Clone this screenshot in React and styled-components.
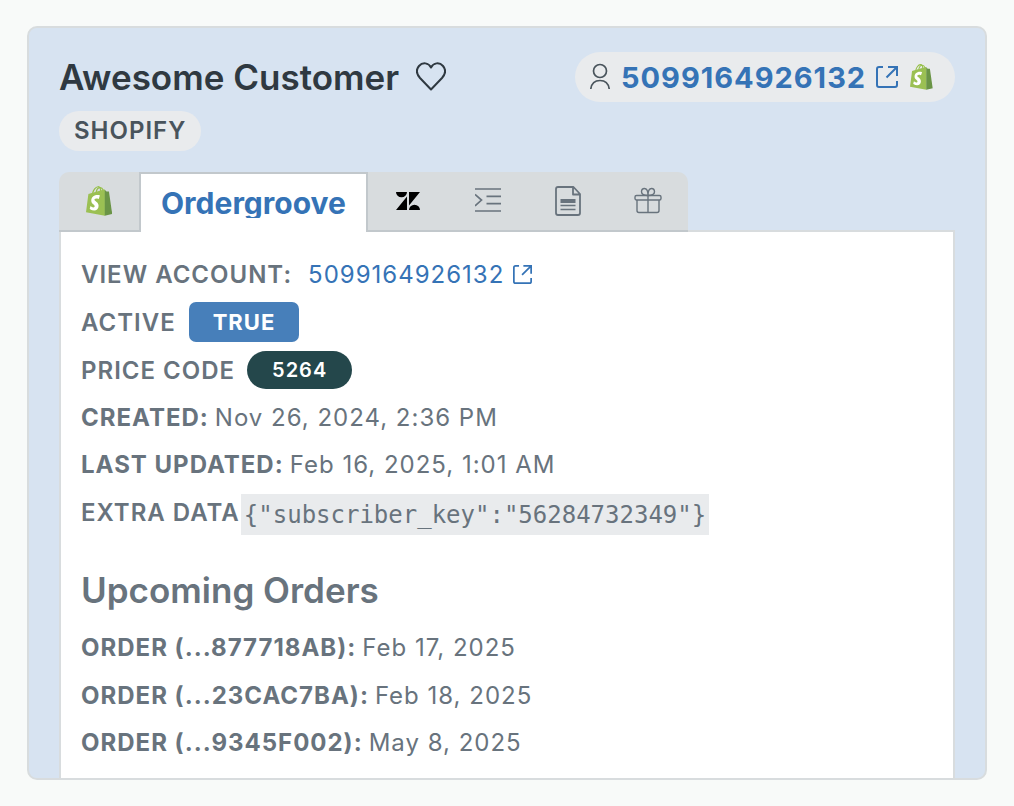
import React from "react";
import styled, { createGlobalStyle, css } from "styled-components";

const color = {
  page: "#f8faf9",
  header: "#d7e3f1",
  line: "#d8dcde",
  lineDark: "#c2c8cc",
  chip: "#e9ebed",
  ink: "#2f3941",
  inkSoft: "#49545c",
  text: "#68737d",
  link: "#3573b6",
};

const GlobalStyle = createGlobalStyle`
  *, *::before, *::after { box-sizing: border-box; }
  body {
    margin: 0;
    background: ${color.page};
    color: ${color.text};
    font-family: Inter, "Liberation Sans", sans-serif;
    -webkit-font-smoothing: antialiased;
  }
  h1, h2, dl, dd, dt { margin: 0; }
  svg { display: block; flex: none; }
`;

const Page = styled.main`
  padding: 26px 27px;
`;

const Card = styled.article`
  border: 2px solid ${color.line};
  border-radius: 10px;
  background: ${color.header};
  padding: 24px 30px 0;
  overflow: hidden;
`;

const Header = styled.header`
  display: flex;
  align-items: center;
  justify-content: space-between;
  min-height: 50px;
`;

const TitleGroup = styled.div`
  display: flex;
  align-items: center;
  gap: 17px;
`;

const Title = styled.h1`
  font-size: 35px;
  line-height: 50px;
  font-weight: 600;
  color: ${color.ink};
`;

const IconButton = styled.button`
  padding: 0;
  border: 0;
  background: none;
  color: ${color.ink};
  cursor: pointer;
`;

const IdChip = styled.div`
  display: flex;
  align-items: center;
  height: 50px;
  padding: 0 22px 0 15px;
  border-radius: 25px;
  background: ${color.chip};
  color: ${color.inkSoft};
`;

const Link = styled.a`
  display: inline-flex;
  align-items: center;
  color: ${color.link};
  text-decoration: none;
  letter-spacing: 1px;
  ${({ $strong }) =>
    $strong
      ? css`
          gap: 10px;
          margin: 0 12px 0 11px;
          font-size: 29px;
          font-weight: 700;
        `
      : css`
          gap: 9px;
          margin-left: 16px;
        `}
`;

const Tag = styled.span`
  display: inline-block;
  margin: 9px 0 21px;
  padding: 0 15px;
  border-radius: 20px;
  background: ${color.chip};
  color: ${color.inkSoft};
  font-size: 24px;
  line-height: 40px;
  font-weight: 600;
  letter-spacing: 1px;
  vertical-align: top;
`;

const Tabs = styled.div`
  display: flex;
  width: fit-content;
  height: 60px;
  margin-bottom: -2px;
  position: relative;
  border-radius: 10px 10px 0 0;
  background: ${color.line};
  overflow: hidden;
`;

const Tab = styled.button`
  display: flex;
  align-items: center;
  justify-content: center;
  width: 80px;
  padding: 0;
  border: 0;
  border-bottom: 2px solid ${color.lineDark};
  background: none;
  color: ${color.text};
  cursor: pointer;

  &[aria-selected="true"] {
    width: auto;
    padding: 0 20px;
    border: 2px solid ${color.lineDark};
    border-bottom: 0;
    background: #fff;
    color: ${color.link};
  }
`;

const TabLabel = styled.span`
  font: 700 30px/30px Inter, "Liberation Sans", sans-serif;
  overflow: hidden;
`;

const Panel = styled.section`
  border: 2px solid ${color.line};
  border-bottom: 0;
  background: #fff;
  padding: 19px 20px 12px;
`;

const Fields = styled.dl`
  font-size: 24px;
`;

const Field = styled.div`
  display: flex;
  align-items: center;
  height: ${({ $tall }) => ($tall ? 48 : 47)}px;
  letter-spacing: 1px;
  white-space: nowrap;
`;

const Label = styled.dt`
  font-weight: ${({ $bold }) => ($bold ? 700 : 600)};
`;

const Value = styled.dd`
  margin-left: ${({ $gap = 6 }) => $gap}px;
`;

const Flag = styled.span`
  display: block;
  padding: 0 24px;
  border-radius: 7px;
  background: #477fba;
  color: #fff;
  font-size: 22px;
  line-height: 40px;
  font-weight: 700;
`;

const Code = styled.span`
  display: block;
  padding: 0 25px;
  border-radius: 19px;
  background: #24474b;
  color: #fff;
  font-size: 20px;
  line-height: 38px;
  font-weight: 600;
`;

const Json = styled.code`
  display: block;
  margin-top: 4px;
  padding: 2px 3px 0;
  background: ${color.chip};
  font-family: "DejaVu Sans Mono", monospace;
  font-size: 24px;
  line-height: 39px;
  letter-spacing: 0;
`;

const SectionTitle = styled.h2`
  margin: 32px 0 12px;
  font-size: 35px;
  line-height: 44px;
  font-weight: 600;
`;

const Shopify = ({ height = 30 }) => (
  <svg height={height} viewBox="0 0 110 125" aria-hidden="true">
    <g fill="none" stroke="#95bf47" strokeWidth="5">
      <path d="M28 30C30 17 40 3.500 50 3C58 2.600 62 11 61 22" />
      <path d="M42 27C44 16 51 6.500 59 6.500C66 6.500 70 13 72 18" />
    </g>
    <path fill="#9bc053" d="M79 15.500V124L0 109.300L9.400 37C9.800 33.500 10 33.400 13.500 32.300L74.700 14.800C76.500 14.300 78 14.500 79 15.500Z" />
    <path fill="#6a9446" d="M78.100 123.900l31.400-7.800c0 0-13.500-91.300-13.600-91.900c-.1-.6-.6-1-1.100-1c-.5 0-9.300-.2-9.300-.2s-5.400-5.200-7.400-7.200V123.900z" />
    <path fill="#fff" d="M57.900 39.500l-4.900 14.600c0 0-4.300-2.300-9.600-2.300c-7.700 0-8.100 4.800-8.100 6c0 6.600 17.200 9.100 17.200 24.600c0 12.200-7.700 20-18.100 20c-12.500 0-18.900-7.800-18.900-7.800l3.400-11.100c0 0 6.600 5.700 12.100 5.700c3.600 0 5.100-2.800 5.100-4.900c0-8.600-14.100-9-14.100-23.100c0-11.900 8.500-23.400 25.800-23.400C54.400 37.800 57.900 39.500 57.900 39.500z" />
  </svg>
);

const Line = ({ width, height, weight = 2, children }) => (
  <svg
    width={width}
    height={height}
    viewBox={`0 0 ${width} ${height}`}
    fill="none"
    stroke="currentColor"
    strokeWidth={weight}
    aria-hidden="true"
  >
    {children}
  </svg>
);

const Heart = () => (
  <Line width={30} height={32}>
    <path strokeLinejoin="round" d="M15 28.500L4 17C.5 13 0 8.500 3 5C6.500 1 12.500 1.500 15 6.500C17.500 1.500 23.500 1 27 5C30 8.500 29.500 13 26 17Z" />
  </Line>
);

const Person = () => (
  <Line width={20} height={28} weight={1.7}>
    <circle cx="10" cy="8" r="6.500" />
    <path d="M.8 26C1.500 20.500 5 17.500 10 17.500S18.500 20.500 19.200 26" />
  </Line>
);

const External = ({ size }) => (
  <svg width={size} height={size} viewBox="0 0 22 22" fill="none" stroke="currentColor" strokeWidth="2" aria-hidden="true">
    <path d="M7 1H3Q1 1 1 3V19Q1 21 3 21H19Q21 21 21 19V15" />
    <path d="M12 1H21V10M21 1L10.500 11.500" />
  </svg>
);

const Zendesk = () => (
  <svg width="24" height="18" viewBox="0 0 24 18" fill="#000" aria-hidden="true">
    <path d="M0 0H11A5.500 5.300 0 0 1 0 0ZM11 4.500V18H0ZM13 0H24L13 13.500ZM13 18A5.500 5.300 0 0 1 24 18Z" />
  </svg>
);

const Indent = () => (
  <Line width={26} height={28} weight={1.7}>
    <path d="M0 2H26M11.500 9.300H26M11.500 16.700H26M0 24H26M0 7.500L6.500 13L0 19" />
  </Line>
);

const Document = () => (
  <Line width={26} height={30} weight={1.8}>
    <path strokeLinejoin="round" d="M3 1H18.500L25 8V27Q25 29 23 29H3Q1 29 1 27V3Q1 1 3 1ZM18 1V8.500H25" />
    <path strokeWidth="4" d="M5.500 15H20.500" />
    <path strokeWidth="1.500" d="M5.500 19.500H20.500M5.500 23.500H20.500" />
  </Line>
);

const Gift = () => (
  <Line width={28} height={28} weight={1.4}>
    <rect x="1" y="8.500" width="26" height="4.500" rx="1.500" />
    <path d="M3 13V23.500Q3 25.500 5 25.500H23Q25 25.500 25 23.500V13M14 8.500V25.500" />
    <path d="M14 8.500C10 8.500 7.500 7.500 7.500 4.800C7.500 2.800 9 1.500 10.500 1.500C12.800 1.500 14 4 14 8.500C14 4 15.200 1.500 17.500 1.500C19 1.500 20.500 2.800 20.500 4.800C20.500 7.500 18 8.500 14 8.500Z" />
  </Line>
);

const ORDERS = [
  ["ORDER (...877718AB):", "Feb 17, 2025"],
  ["ORDER (...23CAC7BA):", "Feb 18, 2025"],
  ["ORDER (...9345F002):", "May 8, 2025"],
];

export default function App() {
  return (
    <>
      <GlobalStyle />
      <Page>
        <Card>
          <Header>
            <TitleGroup>
              <Title>Awesome Customer</Title>
              <IconButton type="button" aria-label="Favourite">
                <Heart />
              </IconButton>
            </TitleGroup>
            <IdChip>
              <Person />
              <Link href="#customer" $strong>
                5099164926132
                <External size={22} />
              </Link>
              <Shopify height={26} />
            </IdChip>
          </Header>
          <Tag>SHOPIFY</Tag>
          <Tabs role="tablist">
            <Tab type="button" role="tab" aria-selected="false" aria-label="Shopify">
              <Shopify />
            </Tab>
            <Tab type="button" role="tab" aria-selected="true">
              <TabLabel>Ordergroove</TabLabel>
            </Tab>
            <Tab type="button" role="tab" aria-selected="false" aria-label="Zendesk">
              <Zendesk />
            </Tab>
            <Tab type="button" role="tab" aria-selected="false" aria-label="Activity">
              <Indent />
            </Tab>
            <Tab type="button" role="tab" aria-selected="false" aria-label="Notes">
              <Document />
            </Tab>
            <Tab type="button" role="tab" aria-selected="false" aria-label="Gifts">
              <Gift />
            </Tab>
          </Tabs>
          <Panel role="tabpanel" aria-label="Ordergroove">
            <Fields>
              <Field>
                <Label>VIEW ACCOUNT:</Label>
                <Value $gap={0}>
                  <Link href="#account">
                    5099164926132
                    <External size={19} />
                  </Link>
                </Value>
              </Field>
              <Field $tall>
                <Label>ACTIVE</Label>
                <Value $gap={13}>
                  <Flag>TRUE</Flag>
                </Value>
              </Field>
              <Field $tall>
                <Label>PRICE CODE</Label>
                <Value $gap={12}>
                  <Code>5264</Code>
                </Value>
              </Field>
              <Field>
                <Label $bold>CREATED:</Label>
                <Value>Nov 26, 2024, 2:36 PM</Value>
              </Field>
              <Field>
                <Label $bold>LAST UPDATED:</Label>
                <Value>Feb 16, 2025, 1:01 AM</Value>
              </Field>
              <Field $tall>
                <Label>EXTRA DATA</Label>
                <Value $gap={1}>
                  <Json>{'{"subscriber_key":"56284732349"}'}</Json>
                </Value>
              </Field>
            </Fields>
            <SectionTitle>Upcoming Orders</SectionTitle>
            <Fields>
              {ORDERS.map(([label, date], i) => (
                <Field key={label} $tall={i === 1}>
                  <Label $bold>{label}</Label>
                  <Value>{date}</Value>
                </Field>
              ))}
            </Fields>
          </Panel>
        </Card>
      </Page>
    </>
  );
}
